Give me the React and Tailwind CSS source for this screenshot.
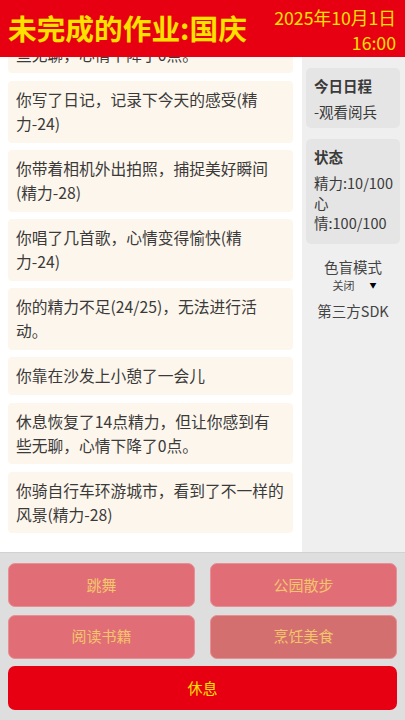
const logs = [
  "休息恢复了14点精力，但让你感到有些无聊，心情下降了0点。",
  "你写了日记，记录下今天的感受(精力-24)",
  "你带着相机外出拍照，捕捉美好瞬间(精力-28)",
  "你唱了几首歌，心情变得愉快(精力-24)",
  "你的精力不足(24/25)，无法进行活动。",
  "你靠在沙发上小憩了一会儿",
  "休息恢复了14点精力，但让你感到有些无聊，心情下降了0点。",
  "你骑自行车环游城市，看到了不一样的风景(精力-28)",
];

const actions = [
  { label: "跳舞", tone: "bg-[#e16e76]" },
  { label: "公园散步", tone: "bg-[#e16e76]" },
  { label: "阅读书籍", tone: "bg-[#e16e76]" },
  { label: "烹饪美食", tone: "bg-[#d3706f]" },
];

export default function App() {
  return (
    <div className="w-[405px] h-[720px] flex flex-col overflow-hidden bg-white font-['Noto_Sans_CJK_SC','Noto_Sans',sans-serif] text-[#3a3a3a]">
      <header className="h-[57px] shrink-0 flex items-center justify-between bg-[#e60012] pl-[8px] pr-[9px] text-[#ffe100]">
        <h1 className="text-[28.7px] font-bold leading-none">未完成的作业:国庆</h1>
        <div className="text-right text-[17.7px] leading-[25px] pt-[2px]">
          <div>2025年10月1日</div>
          <div>16:00</div>
        </div>
      </header>

      <main className="flex-1 min-h-0 flex">
        <div className="w-[302px] shrink-0 overflow-hidden bg-white">
          <div className="-mt-[45px] pl-2 pr-[9px] flex flex-col gap-[7.7px]">
            {logs.map((text, i) => (
              <div key={i} className="bg-[#fdf6ec] rounded-[4px] px-2 py-[7px] text-[15.75px] leading-[23.7px]">
                {text}
              </div>
            ))}
          </div>
        </div>

        <aside className="flex-1 bg-[#efefef] pl-1 pr-[5px] pt-[11px] flex flex-col text-[14.5px]">
          <div className="bg-[#e5e5e5] rounded-[5px] pl-2 pr-1 pt-2 pb-[6px] leading-[20px]">
            <h3 className="font-bold mb-[6px]">今日日程</h3>
            <div>-观看阅兵</div>
          </div>
          <div className="mt-[11px] bg-[#e5e5e5] rounded-[5px] pl-2 pr-1 pt-2 pb-[11px] leading-[20px]">
            <h3 className="font-bold mb-[6px]">状态</h3>
            <div>精力:10/100</div>
            <div>心情:100/100</div>
          </div>
          <div className="mt-[13px] flex flex-col items-center text-[#444]">
            <div className="leading-[20px]">色盲模式</div>
            <div className="h-[16px] flex items-center gap-[15px] text-[11px] pl-[3px]">
              <span>关闭</span>
              <span className="text-[7px] text-black">▼</span>
            </div>
            <div className="mt-[8px] leading-[20px]">第三方SDK</div>
          </div>
        </aside>
      </main>

      <footer className="h-[168px] shrink-0 bg-[#dedede] border-t border-[#d2d2d2] px-2 pt-[10px] pb-[10px]">
        <div className="grid grid-cols-2 gap-x-[15px] gap-y-[7.5px]">
          {actions.map((a) => (
            <button key={a.label} className={`h-[44px] rounded-[7px] border border-[#e88f95] ${a.tone} text-[15px] text-[#f4c56c]`}>
              {a.label}
            </button>
          ))}
          <button className="col-span-2 h-[44px] rounded-[7px] bg-[#e60012] text-[15px] text-[#ffe100]">
            休息
          </button>
        </div>
      </footer>
    </div>
  );
}
